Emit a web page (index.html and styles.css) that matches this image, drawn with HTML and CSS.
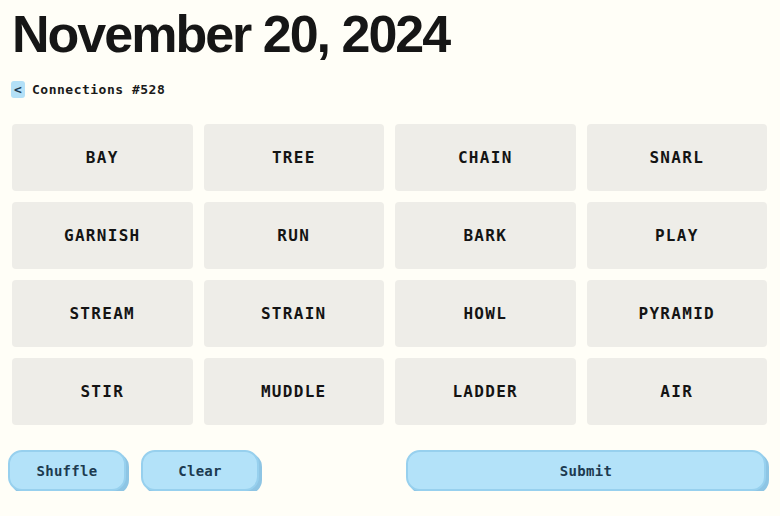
FILE: index.html
```html
<!DOCTYPE html>
<html lang="en">
<head>
    <meta charset="UTF-8">
    <title>Connections #528</title>
    <link rel="stylesheet" href="styles.css">
</head>
<body>
    <main class="game">
        <h1 class="date">November 20, 2024</h1>

        <div class="puzzle-link">
            <span class="back">&lt;</span>
            <span>Connections #528</span>
        </div>

        <div class="board">
            <div class="tile">BAY</div>
            <div class="tile">TREE</div>
            <div class="tile">CHAIN</div>
            <div class="tile">SNARL</div>
            <div class="tile">GARNISH</div>
            <div class="tile">RUN</div>
            <div class="tile">BARK</div>
            <div class="tile">PLAY</div>
            <div class="tile">STREAM</div>
            <div class="tile">STRAIN</div>
            <div class="tile">HOWL</div>
            <div class="tile">PYRAMID</div>
            <div class="tile">STIR</div>
            <div class="tile">MUDDLE</div>
            <div class="tile">LADDER</div>
            <div class="tile">AIR</div>
        </div>

        <div class="controls">
            <div class="left-controls">
                <button class="btn">Shuffle</button>
                <button class="btn">Clear</button>
            </div>
            <button class="btn submit">Submit</button>
        </div>
    </main>
</body>
</html>
```

FILE: styles.css
```css
body {
    margin: 0;
    background-color: #fffef7;
    color: #111;
    font-family: 'DejaVu Sans Mono', monospace;
}

.game {
    padding: 0 13px 0 12px;
}

.date {
    font-family: 'Liberation Sans', Arial, sans-serif;
    font-size: 52px;
    font-weight: bold;
    letter-spacing: -2px;
    line-height: 60px;
    margin: 4px 0 0 0;
    color: #161616;
}

.puzzle-link {
    display: flex;
    align-items: center;
    gap: 7px;
    margin-top: 17px;
    font-size: 13px;
    font-weight: bold;
    letter-spacing: 0.5px;
    color: #1a1a1a;
}

.back {
    display: inline-block;
    width: 14px;
    height: 17px;
    line-height: 17px;
    margin-left: -1px;
    text-align: center;
    background-color: #b3e0f7;
    border-radius: 3px;
    color: #1b3a52;
    letter-spacing: 0;
}

.board {
    display: grid;
    grid-template-columns: repeat(4, 1fr);
    grid-auto-rows: 67px;
    gap: 11px;
    margin-top: 26px;
}

.tile {
    display: flex;
    align-items: center;
    justify-content: center;
    background-color: #eeede8;
    border-radius: 4px;
    font-size: 16px;
    font-weight: bold;
    letter-spacing: 1.3px;
    color: #141414;
}

.controls {
    display: flex;
    align-items: flex-start;
    margin: 25px 0 0 -4px;
}

.left-controls {
    display: flex;
    gap: 15px;
}

.btn {
    width: 118px;
    height: 41px;
    padding: 0;
    background-color: #b3e2f9;
    border: 2px solid #97d0ee;
    border-radius: 14px;
    box-shadow: 3px 3px 0 #8ec5e4;
    font-family: 'DejaVu Sans Mono', monospace;
    font-size: 14px;
    font-weight: bold;
    letter-spacing: 0.3px;
    color: #1c3a50;
    cursor: pointer;
}

.submit {
    width: 360px;
    margin-left: auto;
    margin-right: 1px;
}
```
